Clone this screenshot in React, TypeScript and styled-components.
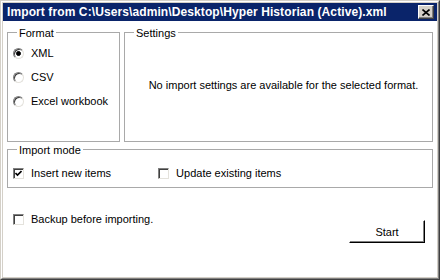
import React from "react";
import styled, { createGlobalStyle } from "styled-components";

const GlobalStyle = createGlobalStyle`
    html, body {
        margin: 0;
        padding: 0;
        background: #ffffff;
    }
    body {
        font-family: "Liberation Sans", Arial, sans-serif;
        font-size: 11px;
        color: #000000;
    }
`;

const Frame = styled.div`
    box-sizing: border-box;
    width: 440px;
    height: 280px;
    border: 1px solid;
    border-color: #d4d0c8 #404040 #404040 #d4d0c8;
`;

const FrameInner = styled.div`
    box-sizing: border-box;
    height: 100%;
    border: 1px solid;
    border-color: #ffffff #808080 #808080 #ffffff;
    padding: 1px;
    background: #d4d0c8;
    display: flex;
    flex-direction: column;
`;

const TitleBar = styled.div`
    height: 18px;
    flex: 0 0 18px;
    background: #0a246a;
    display: flex;
    align-items: center;
    justify-content: space-between;
    padding: 0 3px 0 4px;
`;

const TitleText = styled.span`
    color: #ffffff;
    font-weight: bold;
    font-size: 12px;
    letter-spacing: 0.1px;
    white-space: nowrap;
`;

const CloseButton = styled.div`
    box-sizing: border-box;
    width: 16px;
    height: 14px;
    background: #d4d0c8;
    border: 1px solid;
    border-color: #ffffff #404040 #404040 #ffffff;
    box-shadow: inset -1px -1px 0 #808080;
    display: flex;
    align-items: center;
    justify-content: center;
`;

const Body = styled.div`
    flex: 1;
    background: #ffffff;
    padding: 5px 4px 0;
    display: flex;
    flex-direction: column;
`;

const TopRow = styled.div`
    display: flex;
    gap: 4px;
    height: 116px;
`;

type GroupProps = {
    $width?: number;
    $height?: number;
};

const Group = styled.fieldset<GroupProps>`
    box-sizing: border-box;
    margin: 0;
    padding: 0 5px;
    border: 1px solid #a9a9a9;
    min-width: 0;
    ${props => props.$width ? `width: ${props.$width}px; flex: 0 0 ${props.$width}px;` : "flex: 1;"}
    ${props => props.$height ? `height: ${props.$height}px;` : ""}
    display: flex;
    flex-direction: column;
`;

const Legend = styled.legend`
    margin-left: 4px;
    padding: 0 2px;
    font-size: 11px;
    line-height: 12px;
    position: relative;
    top: 1px;
`;

const OptionList = styled.div`
    display: flex;
    flex-direction: column;
    gap: 8px;
    padding-top: 7px;
`;

const Option = styled.label`
    display: flex;
    align-items: center;
    height: 16px;
    gap: 7px;
    white-space: nowrap;
`;

const RadioCircle = styled.span<{ $checked?: boolean }>`
    box-sizing: border-box;
    width: 11px;
    height: 11px;
    border-radius: 50%;
    border: 1px solid;
    border-color: #808080 #e4e2dc #e4e2dc #808080;
    box-shadow: inset 1px 1px 0 #404040;
    background: #ffffff;
    display: flex;
    align-items: center;
    justify-content: center;
    &::after {
        content: "";
        display: ${props => props.$checked ? "block" : "none"};
        width: 3px;
        height: 3px;
        border-radius: 50%;
        background: #000000;
        border: 0.5px solid #000000;
    }
`;

const CheckSquare = styled.span`
    box-sizing: border-box;
    width: 11px;
    height: 11px;
    border: 1px solid;
    border-color: #808080 #e4e2dc #e4e2dc #808080;
    box-shadow: inset 1px 1px 0 #404040;
    background: #ffffff;
    display: flex;
    align-items: center;
    justify-content: center;
`;

const SettingsMessage = styled.div`
    flex: 1;
    display: flex;
    align-items: center;
    justify-content: center;
    padding: 0 0 9px 10px;
    white-space: nowrap;
`;

const ModeGroupWrap = styled.div`
    margin-top: 1px;
`;

const ModeRow = styled.div`
    display: flex;
    gap: 47px;
    padding-top: 10px;
`;

const BottomBar = styled.div`
    display: flex;
    justify-content: space-between;
    align-items: flex-start;
    padding: 23px 8px 0 6px;
`;

const StartButton = styled.button`
    box-sizing: border-box;
    width: 76px;
    height: 23px;
    margin-top: 9px;
    background: #ffffff;
    border: 1px solid;
    border-color: #ffffff #000000 #000000 #ffffff;
    box-shadow: inset -1px -1px 0 #808080;
    font-family: "Liberation Sans", Arial, sans-serif;
    font-size: 11px;
    color: #000000;
    padding: 0;
`;

const Radio: React.FC<{ checked?: boolean; label: string }> = ({ checked, label }) => (
    <Option>
        <RadioCircle $checked={checked} />
        <span>{label}</span>
    </Option>
);

const Checkbox: React.FC<{ checked?: boolean; label: string }> = ({ checked, label }) => (
    <Option>
        <CheckSquare>
            {checked && (
                <svg width="7" height="7" viewBox="0 0 7 7">
                    <path d="M0.5 3 L2.5 5 L6.5 1" stroke="#000" strokeWidth="1.6" fill="none" />
                </svg>
            )}
        </CheckSquare>
        <span>{label}</span>
    </Option>
);

const App: React.FC = () => {
    return (
        <>
            <GlobalStyle />
            <Frame>
                <FrameInner>
                    <TitleBar>
                        <TitleText>Import from C:\Users\admin\Desktop\Hyper Historian (Active).xml</TitleText>
                        <CloseButton>
                            <svg width="8" height="7" viewBox="0 0 8 7">
                                <path d="M0.5 0.5 L7.5 6.5 M7.5 0.5 L0.5 6.5" stroke="#000" strokeWidth="1.6" />
                            </svg>
                        </CloseButton>
                    </TitleBar>
                    <Body>
                        <TopRow>
                            <Group $width={113}>
                                <Legend>Format</Legend>
                                <OptionList>
                                    <Radio checked label="XML" />
                                    <Radio label="CSV" />
                                    <Radio label="Excel workbook" />
                                </OptionList>
                            </Group>
                            <Group>
                                <Legend>Settings</Legend>
                                <SettingsMessage>
                                    No import settings are available for the selected format.
                                </SettingsMessage>
                            </Group>
                        </TopRow>
                        <ModeGroupWrap>
                            <Group $height={45}>
                                <Legend>Import mode</Legend>
                                <ModeRow>
                                    <Checkbox checked label="Insert new items" />
                                    <Checkbox label="Update existing items" />
                                </ModeRow>
                            </Group>
                        </ModeGroupWrap>
                        <BottomBar>
                            <Checkbox label="Backup before importing." />
                            <StartButton>Start</StartButton>
                        </BottomBar>
                    </Body>
                </FrameInner>
            </Frame>
        </>
    );
};

export default App;
